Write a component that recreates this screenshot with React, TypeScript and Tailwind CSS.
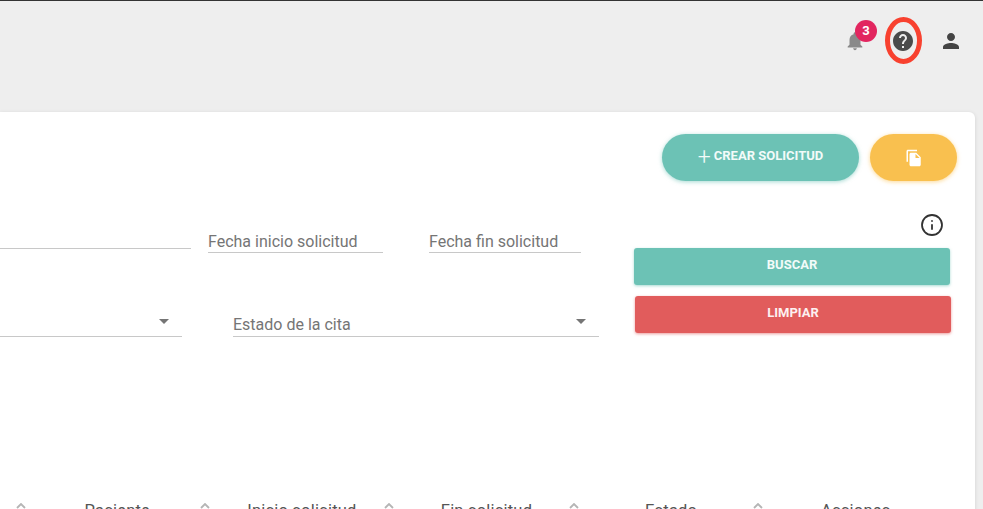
import { Info } from "lucide-react";

const BELL = "M12 22c1.1 0 2-.9 2-2h-4c0 1.1.89 2 2 2zm6-6v-5c0-3.07-1.64-5.64-4.5-6.32V4c0-.83-.67-1.5-1.5-1.5s-1.5.67-1.5 1.5v.68C7.63 5.36 6 7.92 6 11v5l-2 2v1h16v-1l-2-2z";
const HELP = "M12 2C6.48 2 2 6.48 2 12s4.48 10 10 10 10-4.48 10-10S17.52 2 12 2zm1 17h-2v-2h2v2zm2.07-7.75l-.9.92C13.45 12.9 13 13.5 13 15h-2v-.5c0-1.1.45-2.1 1.17-2.83l1.24-1.26c.37-.36.59-.86.59-1.41 0-1.1-.9-2-2-2s-2 .9-2 2H8c0-2.21 1.79-4 4-4s4 1.79 4 4c0 .88-.36 1.68-.93 2.25z";
const PERSON = "M12 12c2.21 0 4-1.79 4-4s-1.79-4-4-4-4 1.79-4 4 1.79 4 4 4zm0 2c-2.67 0-8 1.34-8 4v2h16v-2c0-2.66-5.33-4-8-4z";
const FILE_COPY = "M16 1H4c-1.1 0-2 .9-2 2v14h2V3h12V1zm-1 4l6 6v10c0 1.1-.9 2-2 2H7.99C6.89 23 6 22.1 6 21l.01-14c0-1.1.89-2 1.99-2h7zm-1 7h5.5L14 6.5V12z";

const COLUMNS = ["Paciente", "Inicio solicitud", "Fin solicitud", "Estado", "Acciones"];

function MatIcon({ d, className }: { d: string; className: string }) {
  return (
    <svg viewBox="0 0 24 24" className={className} fill="currentColor">
      <path d={d} />
    </svg>
  );
}

function SortArrow({ className }: { className: string }) {
  return (
    <svg viewBox="0 0 10 6" className={className} fill="none" stroke="#b5b5b5" strokeWidth="1.8">
      <path d="M1 5l4-4 4 4" />
    </svg>
  );
}

function Caret() {
  return <span className="absolute right-[13px] top-[7px] h-0 w-0 border-x-[5px] border-t-[5px] border-x-transparent border-t-[#757575]" />;
}

export default function App() {
  return (
    <div className="h-[509px] w-[983px] overflow-hidden border-t border-[#333] bg-[#eeeeee] font-['Roboto',sans-serif]">
      {/* Top bar */}
      <header className="flex h-[111px] justify-end gap-[24px] pr-[20px] pt-[28px] text-[#555]">
        <div className="relative h-6 w-6">
          <MatIcon d={BELL} className="h-[22px] w-[22px] translate-x-px translate-y-px text-[#8a8a8a]" />
          <span className="absolute left-[12px] top-[-9px] flex h-[22px] w-[22px] items-center justify-center rounded-full bg-[#e2265f] text-[13px] font-bold text-white">
            3
          </span>
        </div>
        <div className="relative h-6 w-6">
          <MatIcon d={HELP} className="h-6 w-6 text-[#4a4a4a]" />
          <span className="absolute left-[-6px] top-[-12px] h-[47px] w-[37px] rounded-[50%] border-[5px] border-[#f8412f]" />
        </div>
        <MatIcon d={PERSON} className="h-6 w-6 text-[#444]" />
      </header>

      {/* Card */}
      <section className="mr-[8px] h-[400px] overflow-hidden rounded-tr-[6px] bg-white shadow-[0_1px_4px_rgba(0,0,0,0.12)]">
        <div className="flex justify-end gap-[11px] pr-[18px] pt-[22px]">
          <button className="flex h-[47px] w-[197px] items-center justify-center gap-[3px] rounded-full bg-[#6cc2b5] pb-[3px] text-[13px] font-bold tracking-[0px] text-[#f2fbf9] shadow-[0_1px_4px_rgba(108,194,181,0.6)]">
            <span className="translate-y-[2px] text-[23px] font-light leading-[20px]">+</span>
            CREAR SOLICITUD
          </button>
          <button className="flex h-[47px] w-[87px] items-center justify-center rounded-full bg-[#f9c04f] text-white shadow-[0_1px_4px_rgba(251,192,79,0.6)]">
            <MatIcon d={FILE_COPY} className="h-[18px] w-[18px]" />
          </button>
        </div>

        <div className="flex">
          {/* Filters */}
          <div className="w-[634px] pt-[47px] text-[16px] text-[#757575]">
            <div className="flex items-start">
              <div className="h-[21px] w-[191px] border-b border-[#c8c8c8]" />
              <div className="ml-[17px] h-[25px] w-[175px] border-b border-[#c8c8c8] leading-[27px]">Fecha inicio solicitud</div>
              <div className="ml-[46px] h-[25px] w-[152px] border-b border-[#c8c8c8] leading-[27px]">Fecha fin solicitud</div>
            </div>
            <div className="mt-[59px] flex items-start">
              <div className="relative h-[25px] w-[182px] border-b border-[#c8c8c8]">
                <Caret />
              </div>
              <div className="relative ml-[51px] h-[25px] w-[366px] border-b border-[#c8c8c8] leading-[25px]">
                Estado de la cita
                <Caret />
              </div>
            </div>
          </div>

          {/* Search actions */}
          <div className="w-[317px] pt-[32px]">
            <div className="flex justify-end pr-[7px]">
              <Info className="h-6 w-6 text-[#333]" strokeWidth={1.8} />
            </div>
            <button className="mt-[11px] flex h-[37px] w-[316px] items-center justify-center rounded-[3px] bg-[#6cc2b5] pb-[3px] text-[13px] font-bold text-[#f2fbf9] shadow-[0_1px_3px_rgba(108,194,181,0.6)]">
              BUSCAR
            </button>
            <button className="ml-[1px] mt-[11px] flex h-[37px] w-[316px] items-center justify-center rounded-[3px] bg-[#e15c5c] pb-[3px] text-[13px] font-bold text-[#fdf0f0] shadow-[0_1px_3px_rgba(225,92,92,0.6)]">
              LIMPIAR
            </button>
          </div>
        </div>

        {/* Table header */}
        <div className="mt-[162px] flex pl-[25px] text-[16.5px] tracking-[0.2px] text-[#555]">
          <SortArrow className="absolute left-[16px] top-[503px] h-[6px] w-[10px]" />
          {COLUMNS.map((col) => (
            <div key={col} className="relative w-[184.6px] text-center">
              {col}
              {col !== "Acciones" && <SortArrow className="absolute right-[0px] top-[4px] h-[6px] w-[10px]" />}
            </div>
          ))}
        </div>
      </section>
    </div>
  );
}
